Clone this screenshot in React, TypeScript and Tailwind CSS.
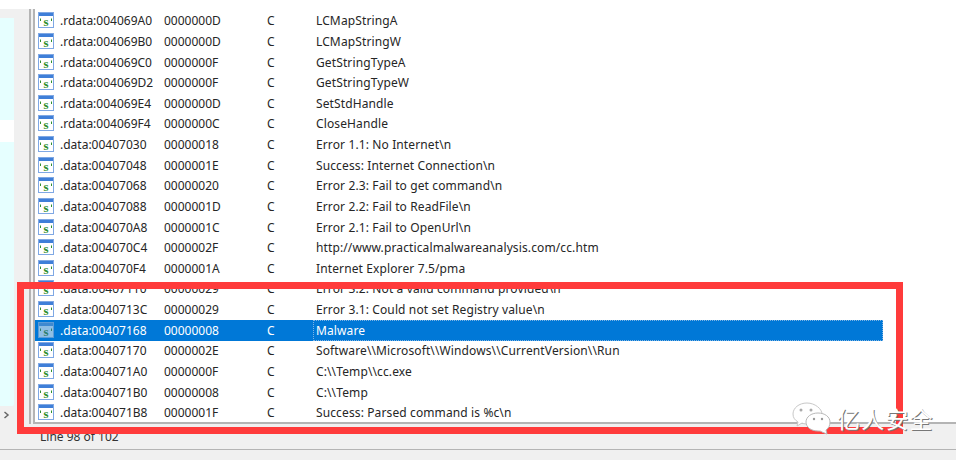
const rows = [
  [".rdata:004069A0", "0000000D", "LCMapStringA"],
  [".rdata:004069B0", "0000000D", "LCMapStringW"],
  [".rdata:004069C0", "0000000F", "GetStringTypeA"],
  [".rdata:004069D2", "0000000F", "GetStringTypeW"],
  [".rdata:004069E4", "0000000D", "SetStdHandle"],
  [".rdata:004069F4", "0000000C", "CloseHandle"],
  [".data:00407030", "00000018", "Error 1.1: No Internet\\n"],
  [".data:00407048", "0000001E", "Success: Internet Connection\\n"],
  [".data:00407068", "00000020", "Error 2.3: Fail to get command\\n"],
  [".data:00407088", "0000001D", "Error 2.2: Fail to ReadFile\\n"],
  [".data:004070A8", "0000001C", "Error 2.1: Fail to OpenUrl\\n"],
  [".data:004070C4", "0000002F", "http://www.practicalmalwareanalysis.com/cc.htm"],
  [".data:004070F4", "0000001A", "Internet Explorer 7.5/pma"],
  [".data:00407110", "00000029", "Error 3.2: Not a valid command provided\\n"],
  [".data:0040713C", "00000029", "Error 3.1: Could not set Registry value\\n"],
  [".data:00407168", "00000008", "Malware"],
  [".data:00407170", "0000002E", "Software\\\\Microsoft\\\\Windows\\\\CurrentVersion\\\\Run"],
  [".data:004071A0", "0000000F", "C:\\\\Temp\\\\cc.exe"],
  [".data:004071B0", "00000008", "C:\\\\Temp"],
  [".data:004071B8", "0000001F", "Success: Parsed command is %c\\n"],
];

function StringIcon({ selected }: { selected: boolean }) {
  const green = selected ? "#2f7f6f" : "#2f8f2f";
  return (
    <svg width="16" height="16" viewBox="0 0 16 16" className="shrink-0">
      <rect x="0.5" y="0.5" width="15" height="15" fill={selected ? "#8fbfe4" : "#ffffff"} stroke={selected ? "#5c9bd6" : "#7fa8e4"} />
      <rect x="1" y="1" width="14" height="3" fill={selected ? "#3f8ad0" : "#3f7fd8"} />
      <text x="8" y="13.5" textAnchor="middle" fontSize="13" fontWeight="700" fontFamily="'Liberation Serif', serif" fill={green}>
        s
      </text>
      <path d="M2.5 6.5v2.5M13.5 6.5v2.5" stroke={green} strokeWidth="1" />
    </svg>
  );
}

function Row({ row, selected }: { row: string[]; selected: boolean }) {
  return (
    <div className={`flex h-[20.63px] w-[848px] items-center ${selected ? "bg-[#0078d7] text-white" : "text-[#262626]"}`}>
      <div className="mb-[2px] ml-[3px] flex w-[22px]">
        <StringIcon selected={selected} />
      </div>
      <span className="w-[104px] whitespace-nowrap">{row[0]}</span>
      <span className="w-[103px]">{row[1]}</span>
      <span className="w-[46px]">C</span>
      <span
        className={`flex h-full flex-1 items-center whitespace-nowrap border pl-[2px] tracking-[0.12px] ${
          selected ? "border-dotted border-[#7fb4e4]" : "border-transparent"
        }`}
      >
        {row[2]}
      </span>
    </div>
  );
}

export default function App() {
  return (
    <div className="relative h-[463px] w-[965px] overflow-hidden bg-white font-['Noto_Sans','Open_Sans',sans-serif] text-[12px]">
      <div className="flex h-[450px] w-[956px] flex-col">
        <div className="flex h-[424px] pt-[9px]">
          <div className="flex w-[29px] flex-col bg-[#f0f0f0]">
            <div className="mt-[9px] flex h-[388px] w-[14px] flex-col">
              <div className="h-[102px] bg-[#e6ffff]" />
              <div className="h-[22px] bg-white" />
              <div className="h-[264px] rounded-br-[2px] bg-[#e6ffff]" />
            </div>
            <div className="flex h-[18px] items-center pl-[3px] text-[#666666]">
              <svg width="7" height="8" viewBox="0 0 7 8">
                <path d="M1.5 1l3.5 3-3.5 3" fill="none" stroke="#666666" strokeWidth="1.5" />
              </svg>
            </div>
          </div>
          <div className="w-[6px] border-x-2 border-[#b4b4b4] bg-[#f0f0f0]" />
          <div className="flex-1 border-b-2 border-[#b4b4b4] bg-white pt-[2px]">
            {rows.map((row) => (
              <Row key={row[0]} row={row} selected={row[2] === "Malware"} />
            ))}
          </div>
        </div>
        <div className="flex flex-1 items-center border-b border-[#b4b4b4] bg-[#f0f0f0] pl-[40px] text-[#333333]">
          Line 98 of 102
        </div>
      </div>
      <div className="h-[10px] w-[956px] bg-[#f0f0f0]" />

      {/* red annotation */}
      <div className="absolute top-[282px] left-[17px] h-[152px] w-[886px] border-[7px] border-[#ff3b3b]" />

      {/* watermark */}
      <div className="absolute top-[401px] left-[792px] flex items-center gap-[5px]">
        <svg width="40" height="34" viewBox="0 0 40 34">
          <path d="M15 2C7 2 1 7 1 13c0 4 2 6 5 8l-1 4 5-3c2 1 4 1 7 1 8 0 13-5 13-10S23 2 15 2Z" fill="#ffffff" stroke="#c8c8c8" />
          <path d="M26 12c-7 0-12 4-12 9s5 9 12 9c2 0 3 0 4 1l5 2-1-4c3-2 4-5 4-8 0-5-5-9-12-9Z" fill="#ffffff" stroke="#b8b8b8" />
          <circle cx="9" cy="9" r="1.5" fill="#aaaaaa" />
          <circle cx="19" cy="9" r="1.5" fill="#aaaaaa" />
          <circle cx="22" cy="18" r="1.2" fill="#999999" />
          <circle cx="30" cy="18" r="1.2" fill="#999999" />
        </svg>
        <span className="font-['Noto_Sans_CJK_SC',sans-serif] text-[23px] leading-none tracking-[1.2px] text-white [text-shadow:1px_1px_0_#777777]">
          亿人安全
        </span>
      </div>
    </div>
  );
}
